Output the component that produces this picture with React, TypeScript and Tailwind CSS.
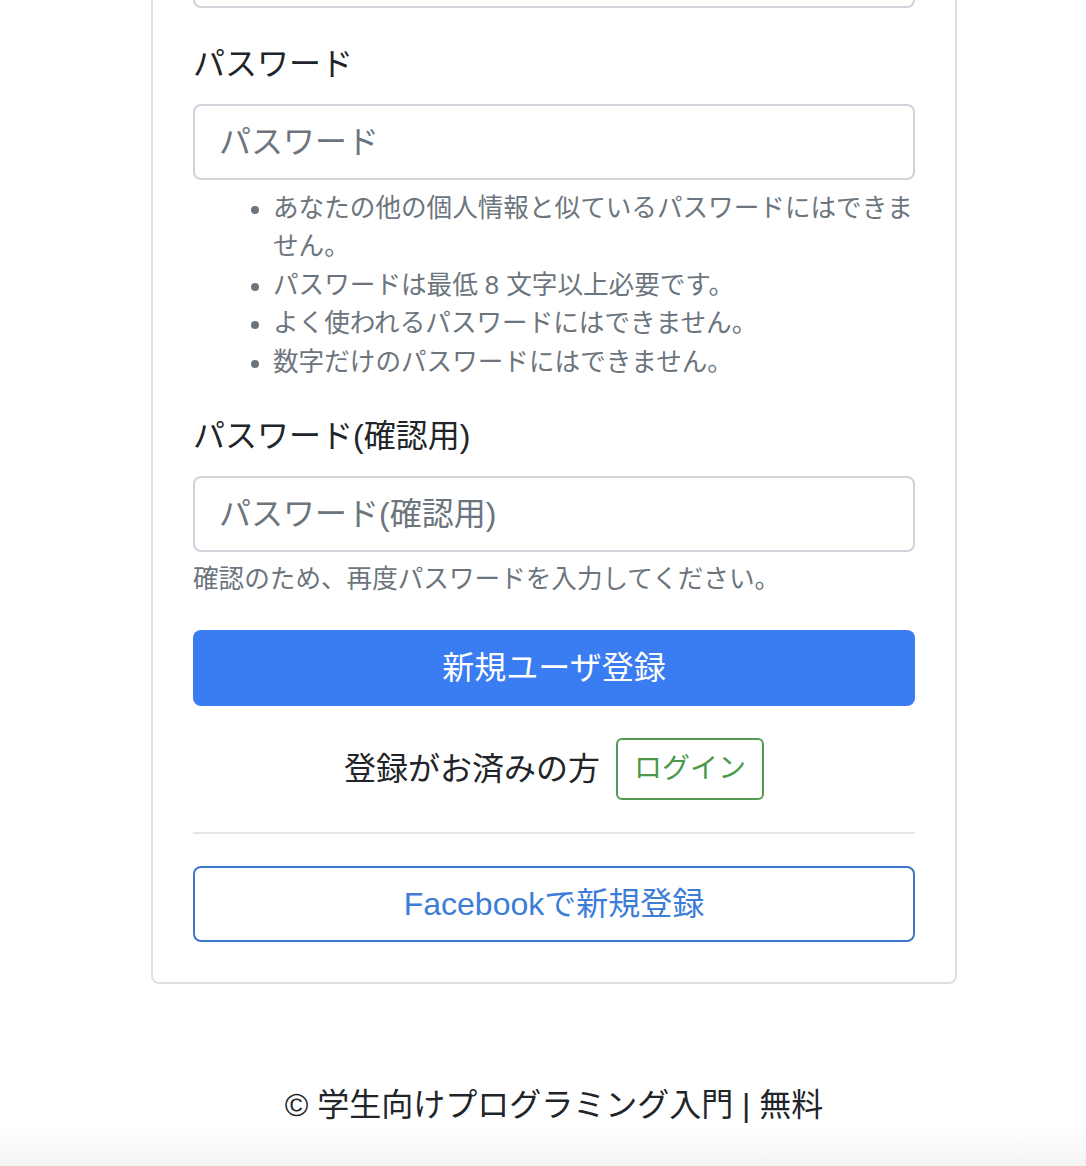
import React from "react";

const font = { fontFamily: '"Liberation Sans", "Noto Sans CJK JP", sans-serif' };

export default function App() {
  return (
    <div className="w-full bg-white text-[#212529]" style={font}>
      <div className="ml-[151px] w-[806px]">
        <div className="border-2 border-t-0 border-[#dfdfdf] rounded-b-[8px] px-[40px] pb-[40px]">
          <div className="h-[8px] border-2 border-t-0 border-[#ced4da] rounded-b-[8px]" />

          <label className="block mt-[32px] text-[32px] leading-[48px] mb-[16px]">パスワード</label>
          <input
            type="password"
            placeholder="パスワード"
            className="block w-full h-[76px] border-2 border-[#ced4da] rounded-[8px] px-[24px] text-[32px] placeholder:text-[#6c757d] outline-none"
            style={font}
          />
          <ul className="mt-[9px] pl-[80px] list-disc text-[25.6px] leading-[38.4px] text-[#6c757d]">
            <li>
              あなたの他の個人情報と似ているパスワードにはできま
              <br />
              せん。
            </li>
            <li>パスワードは最低 8 文字以上必要です。</li>
            <li>よく使われるパスワードにはできません。</li>
            <li>数字だけのパスワードにはできません。</li>
          </ul>

          <label className="block mt-[31px] text-[32px] leading-[48px] mb-[16px]">パスワード(確認用)</label>
          <input
            type="password"
            placeholder="パスワード(確認用)"
            className="block w-full h-[76px] border-2 border-[#ced4da] rounded-[8px] px-[24px] text-[32px] placeholder:text-[#6c757d] outline-none"
            style={font}
          />
          <p className="mt-[8px] text-[25.6px] leading-[38.4px] text-[#6c757d]">
            確認のため、再度パスワードを入力してください。
          </p>

          <button
            className="mt-[32px] w-full h-[76px] bg-[#3a7cf2] text-white text-[32px] rounded-[8px] flex items-center justify-center"
            style={font}
          >
            新規ユーザ登録
          </button>

          <div className="mt-[32px] flex items-center justify-center">
            <span className="text-[32px] leading-[48px]">登録がお済みの方</span>
            <button
              className="ml-[16px] h-[62px] px-[16px] border-2 border-[#529b52] text-[#4a9a4a] text-[28px] rounded-[6px] flex items-center"
              style={font}
            >
              ログイン
            </button>
          </div>

          <div className="mt-[32px] h-[2px] bg-[#e6e6e6]" />

          <button
            className="mt-[32px] w-full h-[76px] border-2 border-[#3f76c8] text-[#3d7dd8] text-[32px] rounded-[8px] flex items-center justify-center"
            style={font}
          >
            Facebookで新規登録
          </button>
        </div>

        <footer className="mt-[97px] text-center text-[32px] leading-[48px]">
          © 学生向けプログラミング入門 | 無料
        </footer>
      </div>
      <div className="h-[38px] bg-gradient-to-b from-white to-[#f3f3f3]" />
    </div>
  );
}
